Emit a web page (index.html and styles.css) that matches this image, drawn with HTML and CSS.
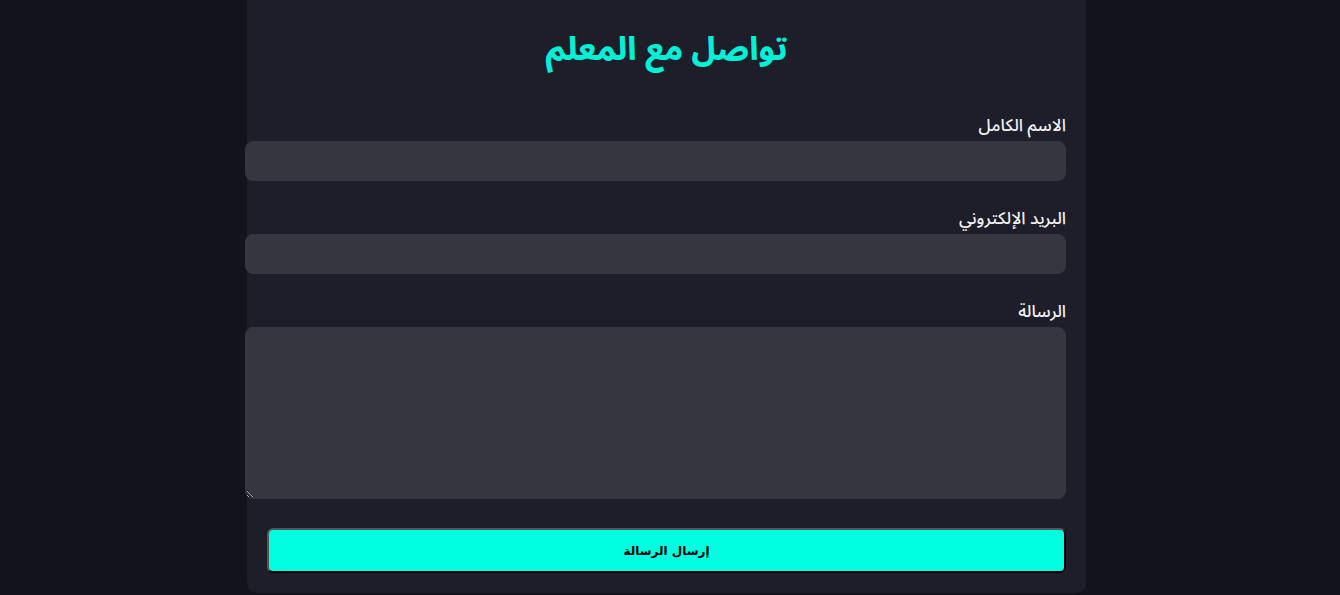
FILE: index.html
```html
<!DOCTYPE html>
<html lang="ar" dir="rtl">
<head>
<meta charset="utf-8">
<title>تواصل مع المعلم</title>
<link rel="stylesheet" href="styles.css">
</head>
<body>
<div class="page">
  <section class="card">
    <h1 class="title">تواصل مع المعلم</h1>
    <form class="form">
      <div class="group">
        <label class="label" for="name">الاسم الكامل</label>
        <input class="field" id="name" type="text">
      </div>
      <div class="group">
        <label class="label" for="email">البريد الإلكتروني</label>
        <input class="field" id="email" type="email">
      </div>
      <div class="group">
        <label class="label" for="msg">الرسالة</label>
        <textarea class="field area" id="msg"></textarea>
      </div>
      <button class="submit" type="button">إرسال الرسالة</button>
    </form>
  </section>
</div>
</body>
</html>
```
FILE: styles.css
```css
html, body {
  margin: 0;
  padding: 0;
  background: #13131e;
  height: 100%;
  overflow: hidden;
}
body {
  font-family: "Noto Sans Arabic", "DejaVu Sans", sans-serif;
  color: #eeeeee;
}
.page {
  padding-right: 7px;
}
.card {
  width: 799px;
  margin: -20px auto 0;
  padding: 20px 20px 20px;
  background: #1e1e2a;
  border-radius: 10px;
}
.title {
  margin: 0;
  padding-top: 26px;
  height: 74px;
  text-align: center;
  color: #00f0d8;
  font-size: 32px;
  line-height: 48px;
  font-weight: 800;
}
.form {
  margin-top: 14px;
}
.group {
  margin-bottom: 26px;
}
.label {
  display: block;
  font-size: 17px;
  line-height: 25px;
  margin-bottom: 2px;
  color: #f2f2f2;
  font-weight: 500;
}
.field {
  display: block;
  width: 100%;
  height: 18px;
  padding: 10px;
  border: 1px solid #363641;
  border-radius: 8px;
  background: #363641;
  color: #fff;
  font-family: inherit;
  font-size: 15px;
}
.area {
  height: 150px;
  resize: vertical;
}
.group:last-of-type {
  margin-bottom: 29px;
}
.submit {
  display: block;
  width: 100%;
  height: 45px;
  background: #00ffe1;
  border: 2px outset #555;
  border-radius: 6px;
  color: #000;
  font-family: "DejaVu Sans", sans-serif;
  font-weight: bold;
  font-size: 12px;
}
```
